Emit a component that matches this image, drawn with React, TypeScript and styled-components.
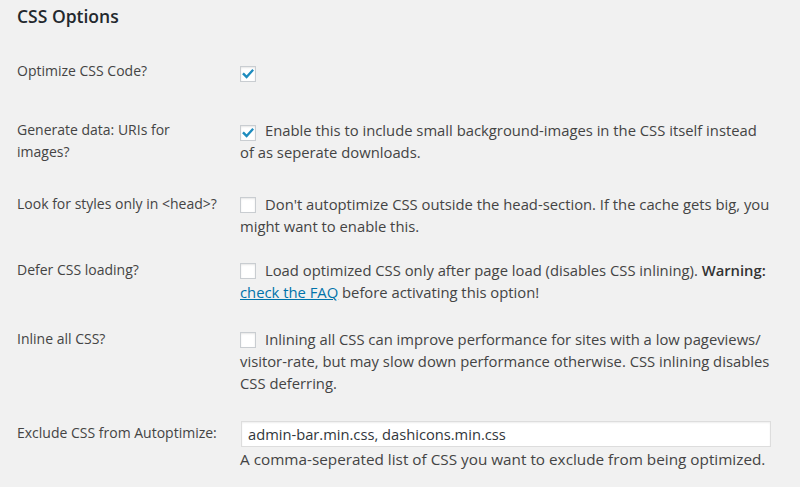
import styled, { createGlobalStyle } from 'styled-components';
import type { JSX, ReactNode } from 'react';

const GlobalStyle = createGlobalStyle`
  html, body {
    margin: 0;
    padding: 0;
    background: #f1f1f1;
  }
  body {
    font-family: "Open Sans", "Noto Sans", sans-serif;
    font-size: 14px;
    color: #444;
  }
`;

const Page = styled.div`
  padding: 3px 30px 0 17px;
`;

const Title = styled.h2`
  margin: 0;
  font-size: 17.5px;
  font-weight: 600;
  line-height: 26px;
  color: #23282d;
`;

const Table = styled.div`
  display: flex;
  flex-direction: column;
  padding-top: 31px;
`;

const Row = styled.div<{ $space: number }>`
  display: flex;
  align-items: flex-start;
  margin-bottom: ${(p): number => p.$space}px;
`;

const Label = styled.div<{ $tall?: boolean }>`
  width: 223px;
  flex: none;
  line-height: 22px;
  padding-top: ${(p): string => (p.$tall ? '1px' : '0')};
`;

const Control = styled.div`
  flex: 1;
  min-width: 0;
  font-size: 14.8px;
  line-height: 22px;
`;

const CheckLine = styled.div`
  min-height: 22px;
`;

const Box = styled.span`
  display: inline-flex;
  align-items: center;
  justify-content: center;
  box-sizing: border-box;
  width: 16px;
  height: 16px;
  margin: 0 9px 0 0;
  vertical-align: -3px;
  background: #fff;
  border: 1px solid #c9cdd1;
  box-shadow: inset 0 1px 2px rgba(0, 0, 0, 0.1);
`;

const FaqLink = styled.a`
  color: #0073aa;
  text-decoration: underline;
`;

const Strong = styled.strong`
  font-weight: 600;
  color: #333;
`;

const TextInput = styled.input`
  display: block;
  box-sizing: border-box;
  width: 530px;
  height: 26px;
  margin: 0 0 0 1px;
  padding: 0 6px;
  font-family: "Open Sans", "Noto Sans", sans-serif;
  font-size: 14.7px;
  color: #32373c;
  background: #fff;
  border: 1px solid #ddd;
  box-shadow: inset 0 1px 2px rgba(0, 0, 0, 0.07);
  outline: none;
`;

const Hint = styled.p`
  margin: 1px 0 0;
  font-size: 15.3px;
  line-height: 22px;
  white-space: nowrap;
`;

type Option = {
  label: ReactNode;
  checked: boolean;
  text?: ReactNode;
  space: number;
};

const options: Option[] = [
  { label: 'Optimize CSS Code?', checked: true, space: 37 },
  {
    label: (
      <>
        Generate data: URIs for
        <br />
        images?
      </>
    ),
    checked: true,
    text: 'Enable this to include small background-images in the CSS itself instead of as seperate downloads.',
    space: 30,
  },
  {
    label: 'Look for styles only in <head>?',
    checked: false,
    text: "Don't autoptimize CSS outside the head-section. If the cache gets big, you might want to enable this.",
    space: 22,
  },
  {
    label: 'Defer CSS loading?',
    checked: false,
    text: (
      <>
        Load optimized CSS only after page load (disables CSS inlining).{' '}
        <Strong>Warning:</Strong> <FaqLink href="#">check the FAQ</FaqLink> before activating
        this option!
      </>
    ),
    space: 25,
  },
  {
    label: 'Inline all CSS?',
    checked: false,
    text: 'Inlining all CSS can improve performance for sites with a low pageviews/ visitor-rate, but may slow down performance otherwise. CSS inlining disables CSS deferring.',
    space: 27,
  },
];

const CheckBox = ({ checked }: { checked: boolean }): JSX.Element => (
  <Box>
    {checked && (
      <svg width="12" height="12" viewBox="0 0 12 12">
        <path
          d="M1.8 6.2 L4.6 9 L10.4 2.6"
          fill="none"
          stroke="#1e8cbe"
          strokeWidth="2.4"
          strokeLinecap="square"
        />
      </svg>
    )}
  </Box>
);

export default function App(): JSX.Element {
  return (
    <Page>
      <GlobalStyle />
      <Title>CSS Options</Title>
      <Table>
        {options.map((opt, i) => (
          <Row key={i} $space={opt.space}>
            <Label>{opt.label}</Label>
            <Control>
              <CheckLine>
                <CheckBox checked={opt.checked} />
                {opt.text}
              </CheckLine>
            </Control>
          </Row>
        ))}
        <Row $space={0}>
          <Label $tall>Exclude CSS from Autoptimize:</Label>
          <Control>
            <TextInput defaultValue="admin-bar.min.css, dashicons.min.css" />
            <Hint>A comma-seperated list of CSS you want to exclude from being optimized.</Hint>
          </Control>
        </Row>
      </Table>
    </Page>
  );
}
